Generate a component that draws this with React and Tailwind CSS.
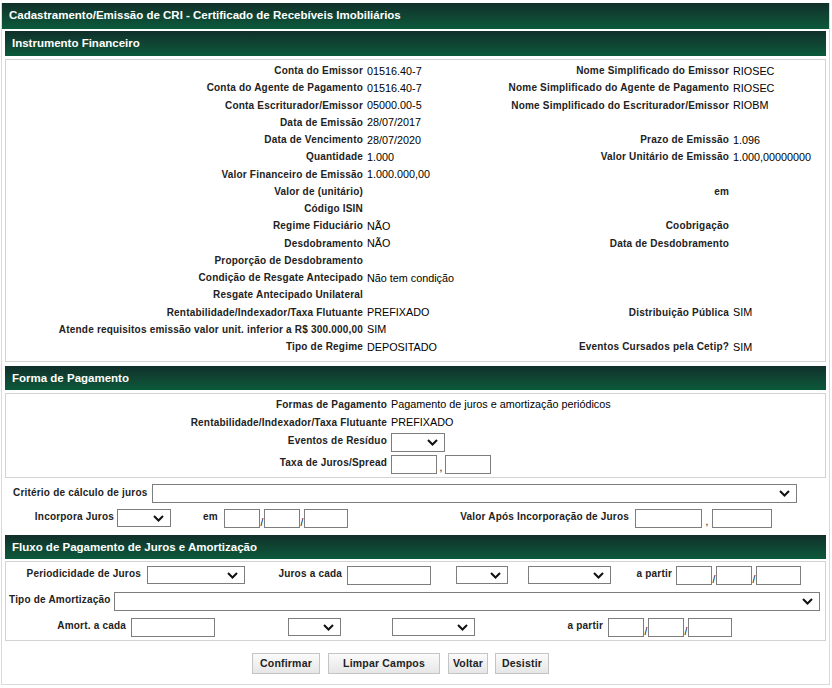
import React from 'react'

const info = [
  ['Conta do Emissor', '01516.40-7', 'Nome Simplificado do Emissor', 'RIOSEC'],
  ['Conta do Agente de Pagamento', '01516.40-7', 'Nome Simplificado do Agente de Pagamento', 'RIOSEC'],
  ['Conta Escriturador/Emissor', '05000.00-5', 'Nome Simplificado do Escriturador/Emissor', 'RIOBM'],
  ['Data de Emissão', '28/07/2017', '', ''],
  ['Data de Vencimento', '28/07/2020', 'Prazo de Emissão', '1.096'],
  ['Quantidade', '1.000', 'Valor Unitário de Emissão', '1.000,00000000'],
  ['Valor Financeiro de Emissão', '1.000.000,00', '', ''],
  ['Valor de (unitário)', '', 'em', ''],
  ['Código ISIN', '', '', ''],
  ['Regime Fiduciário', 'NÃO', 'Coobrigação', ''],
  ['Desdobramento', 'NÃO', 'Data de Desdobramento', ''],
  ['Proporção de Desdobramento', '', '', ''],
  ['Condição de Resgate Antecipado', 'Não tem condição', '', ''],
  ['Resgate Antecipado Unilateral', '', '', ''],
  ['Rentabilidade/Indexador/Taxa Flutuante', 'PREFIXADO', 'Distribuição Pública', 'SIM'],
  ['Atende requisitos emissão valor unit. inferior a R$ 300.000,00', 'SIM', '', ''],
  ['Tipo de Regime', 'DEPOSITADO', 'Eventos Cursados pela Cetip?', 'SIM'],
]

function Header({ children, className = '' }) {
  return (
    <div className={`bg-gradient-to-b from-[#10302a] to-[#0a5a3b] text-white font-bold text-[11.5px] flex items-center pl-[7px] ${className}`}>
      {children}
    </div>
  )
}

function Select({ className = '' }) {
  return (
    <div className={`border border-[#7d7d7d] bg-white flex items-center justify-end pr-[6px] shrink-0 ${className}`}>
      <svg width="11" height="7" viewBox="0 0 11 7">
        <path d="M1 1 L5.5 5.5 L10 1" fill="none" stroke="#111" strokeWidth="2" />
      </svg>
    </div>
  )
}

function Input({ className = '' }) {
  return <div className={`border border-[#7d7d7d] bg-white shrink-0 ${className}`} />
}

// tres campos de data separados por barra
function DateInputs({ w3 = 'w-[44px]' }) {
  return (
    <div className="flex items-end">
      <Input className="w-[36px] h-[19px]" />
      <span className="w-[4px] text-[10px] leading-none text-center">/</span>
      <Input className="w-[36px] h-[19px]" />
      <span className="w-[4px] text-[10px] leading-none text-center">/</span>
      <Input className={`${w3} h-[19px]`} />
    </div>
  )
}

function Lbl({ children, className = '' }) {
  return <span className={`font-bold text-[10px] tracking-[0.2px] text-[#222] whitespace-nowrap ${className}`}>{children}</span>
}

export default function App() {
  return (
    <div className="w-[832px] h-[688px] bg-white pt-[3px] pl-[1px] pr-[2px] font-['Liberation_Sans',Arial,sans-serif] text-[10.8px] text-black">
      <div className="border-x border-b border-[#dadada] h-[682px] flex flex-col">
        <Header className="h-[26px] pl-[7px]">Cadastramento/Emissão de CRI - Certificado de Recebíveis Imobiliários</Header>

        <div className="px-[3px] pt-[2px] flex flex-col">
          <Header className="h-[25px]">Instrumento Financeiro</Header>

          {/* Instrumento Financeiro */}
          <div className="mt-[3px] border border-[#d3d3d3] pt-[2px] pb-[6px]">
            {info.map(([l1, v1, l2, v2], i) => (
              <div key={i} className="h-[17.25px] flex items-center">
                <Lbl className="w-[357px] text-right">{l1}</Lbl>
                <span className="w-[137px] ml-[4px] whitespace-nowrap">{v1}</span>
                <Lbl className="w-[225px] text-right">{l2}</Lbl>
                <span className="ml-[4px] whitespace-nowrap">{v2}</span>
              </div>
            ))}
          </div>

          <Header className="h-[24px] mt-[4px]">Forma de Pagamento</Header>

          {/* Forma de Pagamento */}
          <div className="mt-[3px] border border-[#d3d3d3] pt-[1px] h-[85px]">
            <div className="h-[18px] flex items-center">
              <Lbl className="w-[381px] text-right">Formas de Pagamento</Lbl>
              <span className="ml-[4px]">Pagamento de juros e amortização periódicos</span>
            </div>
            <div className="h-[18px] flex items-center">
              <Lbl className="w-[381px] text-right">Rentabilidade/Indexador/Taxa Flutuante</Lbl>
              <span className="ml-[4px]">PREFIXADO</span>
            </div>
            <div className="h-[22px] flex items-center">
              <Lbl className="w-[381px] text-right -mt-[3px]">Eventos de Resíduo</Lbl>
              <Select className="ml-[4px] w-[54px] h-[19px]" />
            </div>
            <div className="h-[23px] flex items-center">
              <Lbl className="w-[381px] text-right -mt-[4px]">Taxa de Juros/Spread</Lbl>
              <Input className="ml-[4px] w-[46px] h-[19px]" />
              <span className="w-[8px] text-center self-end pb-[1px] text-[10px]">,</span>
              <Input className="w-[46px] h-[19px]" />
            </div>
          </div>

          {/* Critério e incorporação */}
          <div className="mt-[6px] flex items-center h-[19px]">
            <Lbl className="w-[147px] pl-[8px] -mt-[2px]">Critério de cálculo de juros</Lbl>
            <Select className="w-[645px] h-[19px]" />
          </div>
          <div className="mt-[6px] flex items-center h-[18px]">
            <Lbl className="w-[109px] text-right -mt-[4px]">Incorpora Juros</Lbl>
            <Select className="ml-[3px] w-[54px] h-[18px]" />
            <Lbl className="w-[53px] pl-[32px] -mt-[4px]">em</Lbl>
            <DateInputs />
            <Lbl className="w-[287px] text-right pr-[6px] -mt-[4px]">Valor Após Incorporação de Juros</Lbl>
            <Input className="w-[67px] h-[19px]" />
            <span className="w-[10px] text-center self-end text-[10px] leading-none">,</span>
            <Input className="w-[60px] h-[19px]" />
          </div>

          <Header className="h-[24px] mt-[8px]">Fluxo de Pagamento de Juros e Amortização</Header>

          {/* Fluxo de pagamento */}
          <div className="mt-[2px] border border-[#d3d3d3] pt-[4px] pb-[4px] flex flex-col gap-[8px]">
            <div className="flex items-center h-[18px]">
              <Lbl className="w-[135px] text-right -mt-[4px]">Periodicidade de Juros</Lbl>
              <Select className="ml-[6px] w-[98px] h-[18px]" />
              <Lbl className="w-[97px] text-right -mt-[4px]">Juros a cada</Lbl>
              <Input className="ml-[5px] w-[84px] h-[19px]" />
              <Select className="ml-[25px] w-[52px] h-[18px]" />
              <Select className="ml-[20px] w-[83px] h-[18px]" />
              <Lbl className="w-[61px] text-right -mt-[4px]">a partir</Lbl>
              <div className="ml-[4px]"><DateInputs w3="w-[45px]" /></div>
            </div>
            <div className="flex items-center h-[18px]">
              <Lbl className="w-[103px] pl-[3px] -mt-[4px]">Tipo de Amortização</Lbl>
              <Select className="ml-[5px] w-[706px] h-[19px]" />
            </div>
            <div className="flex items-center h-[18px]">
              <Lbl className="w-[120px] text-right -mt-[4px]">Amort. a cada</Lbl>
              <Input className="ml-[5px] w-[84px] h-[19px]" />
              <Select className="ml-[73px] w-[53px] h-[18px]" />
              <Select className="ml-[51px] w-[83px] h-[18px]" />
              <Lbl className="w-[128px] text-right -mt-[4px]">a partir</Lbl>
              <div className="ml-[5px]"><DateInputs /></div>
            </div>
          </div>

          {/* Botões */}
          <div className="mt-[12px] flex items-center pl-[247px] gap-[8px]">
            {['Confirmar', 'Limpar Campos', 'Voltar', 'Desistir'].map((b, i) => (
              <button
                key={b}
                className={`h-[21px] border border-[#c4c4c4] bg-gradient-to-b from-[#fbfbfb] to-[#e6e6e6] font-bold text-[10.5px] tracking-[0.2px] text-[#222] ${
                  i === 0 ? 'w-[68px]' : i === 1 ? 'w-[112px]' : i === 2 ? 'w-[40px]' : 'w-[54px] -ml-[1px]'
                }`}
              >
                {b}
              </button>
            ))}
          </div>
        </div>
      </div>
    </div>
  )
}
